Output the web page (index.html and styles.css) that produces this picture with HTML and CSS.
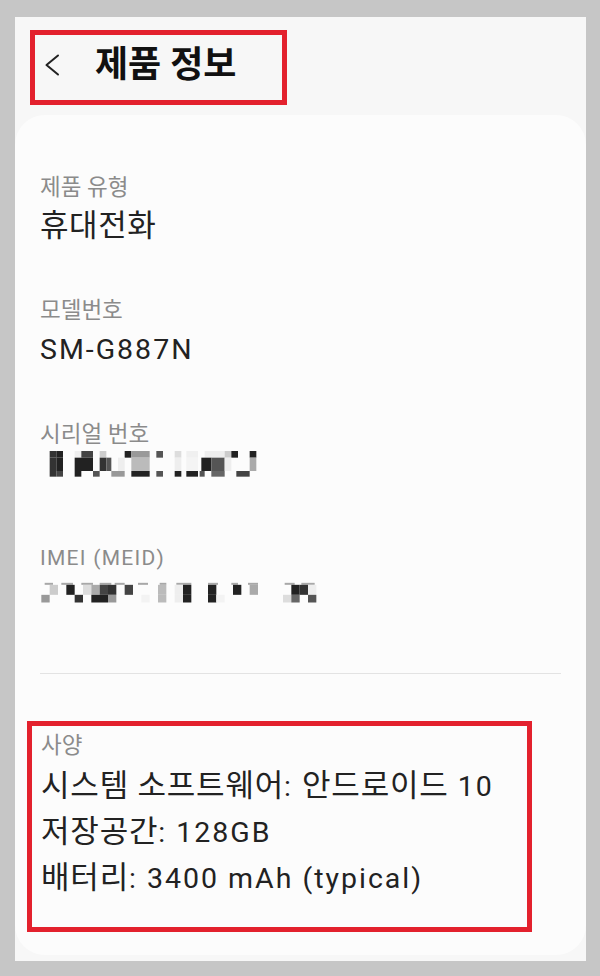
FILE: index.html
```html
<!DOCTYPE html>
<html lang="ko">
<head>
<meta charset="utf-8">
<title>제품 정보</title>
<link rel="stylesheet" href="styles.css">
</head>
<body>
<div class="screen">
  <div class="header">
    <div class="title-box hl">
      <svg class="back" width="16" height="22" viewBox="0 0 16 22"><polyline points="14,1.5 2.5,11 14,20.5" fill="none" stroke="#222" stroke-width="2" stroke-linecap="round" stroke-linejoin="round"/></svg>
      <span class="title">제품 정보</span>
    </div>
  </div>
  <div class="card">
    <div class="item">
      <div class="label">제품 유형</div>
      <div class="value">휴대전화</div>
    </div>
    <div class="item">
      <div class="label">모델번호</div>
      <div class="value"><span class="en">SM-G887N</span></div>
    </div>
    <div class="item">
      <div class="label">시리얼 번호</div>
      <svg class="mosaic" width="225" height="48" viewBox="6 9 675 144">
        <rect x="35" y="15" width="20" height="20" fill="#333"/>
        <rect x="55" y="15" width="20" height="20" fill="#222"/>
        <rect x="110" y="15" width="20" height="20" fill="#eee"/>
        <rect x="130" y="15" width="35" height="20" fill="#444"/>
        <rect x="185" y="15" width="20" height="20" fill="#ccc"/>
        <rect x="260" y="15" width="20" height="20" fill="#222"/>
        <rect x="280" y="15" width="55" height="20" fill="#999"/>
        <rect x="355" y="15" width="20" height="20" fill="#555"/>
        <rect x="410" y="15" width="20" height="20" fill="#ddd"/>
        <rect x="445" y="15" width="35" height="20" fill="#f0f0f0"/>
        <rect x="500" y="15" width="60" height="20" fill="#eee"/>
        <rect x="560" y="15" width="20" height="20" fill="#ccc"/>
        <rect x="580" y="15" width="20" height="20" fill="#222"/>
        <rect x="635" y="15" width="20" height="20" fill="#222"/>

        <rect x="35" y="35" width="20" height="40" fill="#333"/>
        <rect x="55" y="35" width="20" height="40" fill="#222"/>
        <rect x="110" y="35" width="55" height="40" fill="#222"/>
        <rect x="185" y="35" width="20" height="40" fill="#333"/>
        <rect x="205" y="35" width="15" height="40" fill="#555"/>
        <rect x="240" y="35" width="20" height="40" fill="#eee"/>
        <rect x="280" y="35" width="55" height="40" fill="#bbb"/>
        <rect x="410" y="35" width="20" height="40" fill="#eee"/>
        <rect x="445" y="35" width="35" height="40" fill="#f4f4f4"/>
        <rect x="490" y="35" width="30" height="40" fill="#222"/>
        <rect x="520" y="35" width="40" height="40" fill="#555"/>
        <rect x="560" y="35" width="20" height="40" fill="#eee"/>
        <rect x="635" y="35" width="20" height="40" fill="#aaa"/>

        <rect x="35" y="75" width="20" height="17" fill="#333"/>
        <rect x="55" y="75" width="20" height="17" fill="#444"/>
        <rect x="110" y="75" width="20" height="17" fill="#222"/>
        <rect x="165" y="75" width="20" height="17" fill="#555"/>
        <rect x="220" y="75" width="40" height="17" fill="#999"/>
        <rect x="280" y="75" width="55" height="17" fill="#222"/>
        <rect x="355" y="75" width="20" height="17" fill="#555"/>
        <rect x="410" y="75" width="20" height="17" fill="#222"/>
        <rect x="445" y="75" width="35" height="17" fill="#222"/>
        <rect x="485" y="75" width="15" height="17" fill="#555"/>
        <rect x="520" y="75" width="40" height="17" fill="#666"/>
        <rect x="595" y="75" width="40" height="17" fill="#444"/>
      </svg>
    </div>
    <div class="item">
      <div class="label"><span class="en">IMEI (MEID)</span></div>
      <svg class="mosaic" width="292" height="48" viewBox="6 -10.5 876 144">
        <g fill="#a8a8a8">
          <rect x="20" y="19" width="25" height="6"/>
          <rect x="70" y="19" width="35" height="6"/>
          <rect x="130" y="19" width="35" height="6"/>
          <rect x="185" y="19" width="35" height="6"/>
          <rect x="230" y="19" width="30" height="6"/>
          <rect x="300" y="19" width="30" height="6"/>
          <rect x="365" y="19" width="20" height="6"/>
          <rect x="415" y="19" width="45" height="6"/>
          <rect x="510" y="19" width="30" height="6"/>
          <rect x="580" y="19" width="20" height="6"/>
          <rect x="630" y="19" width="30" height="6"/>
          <rect x="740" y="19" width="30" height="6"/>
          <rect x="790" y="19" width="40" height="6"/>
        </g>
        <rect x="35" y="25" width="25" height="30" fill="#ccc"/>
        <rect x="85" y="25" width="25" height="30" fill="#222"/>
        <rect x="135" y="25" width="25" height="30" fill="#ddd"/>
        <rect x="160" y="25" width="25" height="30" fill="#aaa"/>
        <rect x="185" y="25" width="25" height="30" fill="#444"/>
        <rect x="210" y="25" width="25" height="30" fill="#333"/>
        <rect x="260" y="25" width="25" height="30" fill="#444"/>
        <rect x="360" y="25" width="25" height="30" fill="#bbb"/>
        <rect x="410" y="25" width="25" height="30" fill="#eee"/>
        <rect x="435" y="25" width="25" height="30" fill="#222"/>
        <rect x="510" y="25" width="25" height="30" fill="#222"/>
        <rect x="585" y="25" width="25" height="30" fill="#222"/>
        <rect x="635" y="25" width="25" height="30" fill="#aaa"/>
        <rect x="760" y="25" width="25" height="30" fill="#222"/>
        <rect x="785" y="25" width="25" height="30" fill="#333"/>
        <rect x="810" y="25" width="25" height="30" fill="#eee"/>

        <rect x="10" y="55" width="25" height="23" fill="#999"/>
        <rect x="110" y="55" width="25" height="23" fill="#333"/>
        <rect x="160" y="55" width="50" height="23" fill="#222"/>
        <rect x="210" y="55" width="25" height="23" fill="#999"/>
        <rect x="310" y="55" width="25" height="23" fill="#f3f3f3"/>
        <rect x="360" y="55" width="25" height="23" fill="#bbb"/>
        <rect x="410" y="55" width="25" height="23" fill="#eee"/>
        <rect x="435" y="55" width="25" height="23" fill="#222"/>
        <rect x="510" y="55" width="25" height="23" fill="#222"/>
        <rect x="535" y="55" width="25" height="23" fill="#f3f3f3"/>
        <rect x="735" y="55" width="25" height="23" fill="#ddd"/>
        <rect x="760" y="55" width="25" height="23" fill="#666"/>
        <rect x="810" y="55" width="25" height="23" fill="#555"/>
      </svg>
    </div>
    <div class="divider"></div>
    <div class="spec hl">
      <div class="label">사양</div>
      <div class="lines">
        <div class="spec-line">시스템 소프트웨어<span class="en">: </span>안드로이드<span class="en"> 10</span></div>
        <div class="spec-line">저장공간<span class="en">: 128GB</span></div>
        <div class="spec-line">배터리<span class="en">: 3400 mAh (typical)</span></div>
      </div>
    </div>
  </div>
</div>
</body>
</html>
```

FILE: styles.css
```css
* { box-sizing: border-box; }
html, body { margin: 0; padding: 0; }
body {
  background: #c6c6c6;
  width: 600px;
  height: 976px;
  overflow: hidden;
  font-family: Roboto, "Noto Sans CJK KR", sans-serif;
}
.screen {
  margin: 17px 14px 0 15px;
  height: 944px;
  background: #f7f7f7;
  display: flex;
  flex-direction: column;
}
.header {
  padding: 13px 0 0 15px;
  height: 98px;
  flex: none;
}
.hl { border: 5px solid #e3212d; }
.title-box {
  display: inline-flex;
  align-items: center;
  height: 75px;
  width: 257px;
  padding: 0 0 5px 9px;
}
.back { display: block; flex: none; }
.title {
  margin-left: 35px;
  font-size: 36px;
  font-weight: 700;
  color: #111;
  line-height: 1;
  white-space: nowrap;
}
.card {
  flex: 1;
  margin-bottom: 6px;
  background: #fcfcfc;
  border-radius: 30px;
  padding-top: 57px;
}
.item { padding-left: 25px; }
.item + .item { margin-top: 45px; }
.label {
  font-size: 22.5px;
  line-height: 30px;
  color: #8b8b8b;
}
.label .en { font-size: 21px; letter-spacing: 0.06em; }
.value {
  font-size: 31px;
  line-height: 48px;
  color: #222;
  letter-spacing: 0.6px;
}
.en { font-size: 28.5px; letter-spacing: 2px; }
.mosaic { display: block; }
.divider {
  margin: 52px 25px 0;
  border-top: 1px solid #e3e3e3;
  height: 0;
}
.spec {
  margin: 47px 0 0 12px;
  width: 505px;
  padding: 4px 0 26px 9px;
}
.lines { margin-top: 3px; }
.spec-line {
  font-size: 31px;
  line-height: 45px;
  color: #222;
  white-space: nowrap;
  letter-spacing: 0.8px;
}
```
